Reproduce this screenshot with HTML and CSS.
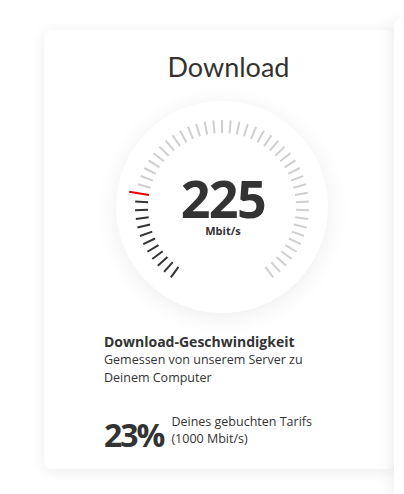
FILE: index.html
```html
<!DOCTYPE html>
<html lang="de">
<head>
    <meta charset="UTF-8">
    <meta name="viewport" content="width=device-width, initial-scale=1.0">
    <title>Speedtest | Download</title>
    <link rel="stylesheet" href="styles.css">
</head>
<body>
    <div class="result-track">
        <div class="result-card">
            <h2 class="card-title">Download</h2>

            <div class="gauge">
                <svg class="gauge-ticks" width="212" height="212" viewBox="0 0 212 212">
                    <defs>
                        <line id="tick" x1="106" y1="19" x2="106" y2="32"/>
                        <line id="tick-now" x1="106" y1="12" x2="106" y2="32"/>
                    </defs>
                    <!-- done -->
                    <g class="tick-done">
                        <use href="#tick" transform="rotate(-144 106 106)"/>
                        <use href="#tick" transform="rotate(-138.24 106 106)"/>
                        <use href="#tick" transform="rotate(-132.48 106 106)"/>
                        <use href="#tick" transform="rotate(-126.72 106 106)"/>
                        <use href="#tick" transform="rotate(-120.96 106 106)"/>
                        <use href="#tick" transform="rotate(-115.2 106 106)"/>
                        <use href="#tick" transform="rotate(-109.44 106 106)"/>
                        <use href="#tick" transform="rotate(-103.68 106 106)"/>
                        <use href="#tick" transform="rotate(-97.92 106 106)"/>
                        <use href="#tick" transform="rotate(-92.16 106 106)"/>
                        <use href="#tick" transform="rotate(-86.4 106 106)"/>
                    </g>
                    <!-- current value -->
                    <use class="tick-now" href="#tick-now" transform="rotate(-80.64 106 106)"/>
                    <!-- rest -->
                    <g class="tick-rest">
                        <use href="#tick" transform="rotate(-74.88 106 106)"/>
                        <use href="#tick" transform="rotate(-69.12 106 106)"/>
                        <use href="#tick" transform="rotate(-63.36 106 106)"/>
                        <use href="#tick" transform="rotate(-57.6 106 106)"/>
                        <use href="#tick" transform="rotate(-51.84 106 106)"/>
                        <use href="#tick" transform="rotate(-46.08 106 106)"/>
                        <use href="#tick" transform="rotate(-40.32 106 106)"/>
                        <use href="#tick" transform="rotate(-34.56 106 106)"/>
                        <use href="#tick" transform="rotate(-28.8 106 106)"/>
                        <use href="#tick" transform="rotate(-23.04 106 106)"/>
                        <use href="#tick" transform="rotate(-17.28 106 106)"/>
                        <use href="#tick" transform="rotate(-11.52 106 106)"/>
                        <use href="#tick" transform="rotate(-5.76 106 106)"/>
                        <use href="#tick" transform="rotate(0 106 106)"/>
                        <use href="#tick" transform="rotate(5.76 106 106)"/>
                        <use href="#tick" transform="rotate(11.52 106 106)"/>
                        <use href="#tick" transform="rotate(17.28 106 106)"/>
                        <use href="#tick" transform="rotate(23.04 106 106)"/>
                        <use href="#tick" transform="rotate(28.8 106 106)"/>
                        <use href="#tick" transform="rotate(34.56 106 106)"/>
                        <use href="#tick" transform="rotate(40.32 106 106)"/>
                        <use href="#tick" transform="rotate(46.08 106 106)"/>
                        <use href="#tick" transform="rotate(51.84 106 106)"/>
                        <use href="#tick" transform="rotate(57.6 106 106)"/>
                        <use href="#tick" transform="rotate(63.36 106 106)"/>
                        <use href="#tick" transform="rotate(69.12 106 106)"/>
                        <use href="#tick" transform="rotate(74.88 106 106)"/>
                        <use href="#tick" transform="rotate(80.64 106 106)"/>
                        <use href="#tick" transform="rotate(86.4 106 106)"/>
                        <use href="#tick" transform="rotate(92.16 106 106)"/>
                        <use href="#tick" transform="rotate(97.92 106 106)"/>
                        <use href="#tick" transform="rotate(103.68 106 106)"/>
                        <use href="#tick" transform="rotate(109.44 106 106)"/>
                        <use href="#tick" transform="rotate(115.2 106 106)"/>
                        <use href="#tick" transform="rotate(120.96 106 106)"/>
                        <use href="#tick" transform="rotate(126.72 106 106)"/>
                        <use href="#tick" transform="rotate(132.48 106 106)"/>
                        <use href="#tick" transform="rotate(138.24 106 106)"/>
                        <use href="#tick" transform="rotate(144 106 106)"/>
                    </g>
                </svg>
                <div class="gauge-value">
                    <span class="speed">225</span>
                    <span class="unit">Mbit/s</span>
                </div>
            </div>

            <div class="result-info">
                <h3>Download-Geschwindigkeit</h3>
                <p>Gemessen von unserem Server zu Deinem Computer</p>
            </div>

            <div class="tariff-share">
                <span class="percent">23%</span>
                <span class="tariff-text">Deines gebuchten Tarifs<br>(1000 Mbit/s)</span>
            </div>
        </div>

        <div class="result-card next-card"></div>
    </div>
</body>
</html>
```

FILE: styles.css
```css
* {
    box-sizing: border-box;
    margin: 0;
    padding: 0;
}

body {
    font-family: 'Open Sans', 'Liberation Sans', sans-serif;
    color: #333;
    background: #fff;
    overflow: hidden;
}

.result-track {
    display: flex;
    align-items: flex-start;
    padding-left: 44px;
    height: 494px;
    overflow: hidden;
}

.result-card {
    background: #fff;
    border-radius: 6px;
    box-shadow: 0 2px 14px rgba(0,0,0,0.08);
}

.result-card:first-child {
    width: 350px;
    height: 439px;
    margin-top: 30px;
    padding: 20px 0 0 0;
    flex-shrink: 0;
}

.next-card {
    width: 10px;
    height: 475px;
    margin-top: 19px;
    flex-shrink: 0;
    border-radius: 6px 0 0 0;
    box-shadow: -4px 0 14px rgba(0,0,0,0.08);
}

.card-title {
    font-family: 'Lato', 'Open Sans', sans-serif;
    font-weight: 400;
    font-size: 27px;
    line-height: 34px;
    text-align: center;
    padding-left: 19px;
    margin-bottom: 17px;
    color: #333;
}

.gauge {
    position: relative;
    width: 212px;
    height: 212px;
    margin-left: 72px;
    border-radius: 50%;
    background: #fff;
    box-shadow: 0 4px 24px rgba(0,0,0,0.07);
}

.gauge-ticks {
    display: block;
}

.gauge-ticks use {
    stroke-width: 2;
}

.tick-done {
    stroke: #333;
}

.tick-rest {
    stroke: #cfcfcf;
}

.tick-now {
    stroke: #e60000;
    stroke-width: 3;
}

.gauge-value {
    position: absolute;
    inset: 0;
    display: flex;
    flex-direction: column;
    align-items: center;
    justify-content: center;
    padding-left: 2px;
}

.speed {
    font-weight: 700;
    font-size: 52px;
    line-height: 44px;
    letter-spacing: -1.5px;
    color: #333;
}

.unit {
    font-weight: 700;
    font-size: 11px;
    line-height: 14px;
    margin-top: 4px;
}

.result-info {
    padding: 20px 60px 0;
}

.result-info h3 {
    font-size: 14px;
    font-weight: 700;
    line-height: 18px;
}

.result-info p {
    font-size: 12.5px;
    line-height: 18px;
    width: 205px;
}

.tariff-share {
    display: flex;
    align-items: center;
    gap: 8px;
    padding: 20px 60px 0;
}

.percent {
    font-size: 32px;
    font-weight: 700;
    letter-spacing: -2px;
    line-height: 36px;
    margin-top: 10px;
}

.tariff-text {
    font-size: 12.5px;
    line-height: 17px;
}
```
